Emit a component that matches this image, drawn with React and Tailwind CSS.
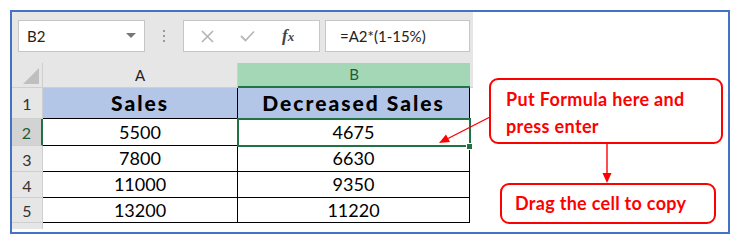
import React from "react";

const rows = [
  { n: "2", a: "5500", b: "4675", h: "h-[27px]", sel: true },
  { n: "3", a: "7800", b: "6630", h: "h-[26px]" },
  { n: "4", a: "11000", b: "9350", h: "h-[26px]" },
  { n: "5", a: "13200", b: "11220", h: "h-[25px]" },
];

export default function App() {
  return (
    <div className="relative w-[737px] h-[243px] bg-white overflow-hidden" style={{ fontFamily: "Lato, 'Open Sans', sans-serif" }}>
      <div className="ml-[10px] mt-[10px] w-[720px] h-[224px] border-2 border-[#4472c4] flex relative">
        {/* Excel part */}
        <div className="w-[461px] flex flex-col">
          {/* toolbar */}
          <div className="h-[51px] bg-[#e6e6e6] flex pt-[8px] pl-[6px]">
            <div className="w-[127px] h-[32px] bg-white border border-[#c6c6c6] flex items-center justify-between pl-[8px] pr-[8px]">
              <span className="text-[15px] text-[#222]">B2</span>
              <svg width="10" height="6" viewBox="0 0 10 6"><path d="M0 0 L10 0 L5 5 Z" fill="#777" /></svg>
            </div>
            <div className="w-[38px] h-[32px] flex flex-col items-center justify-center gap-[3px]">
              <div className="w-[2px] h-[2px] bg-[#9a9a9a]" />
              <div className="w-[2px] h-[2px] bg-[#9a9a9a]" />
              <div className="w-[2px] h-[2px] bg-[#9a9a9a]" />
            </div>
            <div className="w-[137px] h-[32px] bg-white border border-[#c6c6c6] flex items-center">
              <svg className="ml-[17px]" width="13" height="13" viewBox="0 0 13 13"><path d="M1 1 L12 12 M12 1 L1 12" stroke="#b3b3b3" strokeWidth="1.6" /></svg>
              <svg className="ml-[26px]" width="15" height="12" viewBox="0 0 15 12"><path d="M1 6 L5.5 10.5 L14 1.5" stroke="#b8b8b8" strokeWidth="1.8" fill="none" /></svg>
              <span className="ml-[27px] text-[17px] text-[#444] italic" style={{ fontFamily: "'Liberation Serif', 'DejaVu Serif', serif" }}>
                <span className="font-bold">f</span><span className="text-[13px] font-bold">x</span>
              </span>
            </div>
            <div className="ml-[5px] w-[145px] h-[32px] bg-white border border-[#c6c6c6] flex items-center pl-[14px]">
              <span className="text-[15px] text-[#222]">=A2*(1-15%)</span>
            </div>
          </div>
          {/* header row */}
          <div className="h-[25px] flex bg-[#e6e6e6]">
            <div className="w-[31px] h-full border-r border-b border-[#cfcfcf] flex items-end justify-end pr-[3px] pb-[3px]">
              <svg width="16" height="16" viewBox="0 0 16 16"><path d="M16 0 L16 16 L0 16 Z" fill="#bfbfbf" /></svg>
            </div>
            <div className="w-[195px] h-full border-r border-b border-[#cfcfcf] flex items-center justify-center text-[15px] text-[#222]">A</div>
            <div className="w-[232px] h-full bg-[#a3d7b6] border-b-2 border-[#217346] flex items-center justify-center text-[15px] text-[#1e5c3a]">B</div>
            <div className="flex-1 h-full border-b border-[#cfcfcf]" />
          </div>
          {/* row 1 */}
          <div className="h-[31px] flex">
            <div className="w-[31px] h-full bg-[#e6e6e6] border-r border-b border-[#cfcfcf] flex items-center justify-center text-[16px] text-[#333] pt-[2px]">1</div>
            <div className="w-[195px] h-full bg-[#b4c6e7] border-r border-b border-black flex items-center justify-center text-[21px] font-black tracking-[2px] text-black">Sales</div>
            <div className="w-[232px] h-full bg-[#b4c6e7] border-r border-b border-black flex items-center justify-center text-[21px] font-black tracking-[2px] text-black">Decreased Sales</div>
            <div className="flex-1 h-full bg-white" />
          </div>
          {rows.map((r) => (
            <div key={r.n} className={`${r.h} flex`}>
              <div className={`w-[31px] h-full border-b border-[#cfcfcf] flex items-center justify-center text-[16px] pt-[2px] ${r.sel ? "bg-[#d3d3d3] border-r-2 border-r-[#217346] text-[#1e5c3a]" : "bg-[#e6e6e6] border-r border-r-[#cfcfcf] text-[#333]"}`}>{r.n}</div>
              <div className="w-[195px] h-full border-r border-b border-black flex items-center justify-center text-[18px] text-black">{r.a}</div>
              <div className="w-[232px] h-full border-r border-b border-black flex items-center justify-center text-[18px] text-black">{r.b}</div>
              <div className="flex-1 h-full bg-white" />
            </div>
          ))}
          <div className="flex-1 flex">
            <div className="w-[31px] h-[6px] bg-[#e6e6e6] border-r border-[#cfcfcf]" />
          </div>
        </div>
        <div className="flex-1 bg-white" />
        {/* selection */}
        <div className="absolute left-[225px] top-[106px] w-[234px] h-[29px] border-2 border-[#217346]" />
        <div className="absolute left-[454px] top-[131px] w-[7px] h-[7px] bg-[#217346] border border-white" />
      </div>

      {/* annotations */}
      <svg className="absolute left-0 top-0" width="737" height="243" viewBox="0 0 737 243">
        <line x1="490" y1="117" x2="448" y2="138.5" stroke="#ff0000" strokeWidth="1.4" />
        <path d="M439 143 L446 134.5 L450 142 Z" fill="#ff0000" />
        <line x1="607" y1="144" x2="607" y2="175" stroke="#ff0000" strokeWidth="1.4" />
        <path d="M602.5 173 L611.5 173 L607 183 Z" fill="#ff0000" />
      </svg>
      <div className="absolute left-[489px] top-[78px] w-[234px] h-[66px] border-[2.5px] border-[#ff0000] rounded-[9px] bg-white pl-[15px] pt-[6px] text-[#ff0000] font-bold text-[18px] tracking-[0.35px] leading-[27px]">
        <div>Put Formula here and</div>
        <div>press enter</div>
      </div>
      <div className="absolute left-[500px] top-[183px] w-[216px] h-[41px] border-[2.5px] border-[#ff0000] rounded-[9px] bg-white pl-[13px] flex items-center text-[#ff0000] font-bold text-[18px] tracking-[0.3px]">
        Drag the cell to copy
      </div>
    </div>
  );
}
